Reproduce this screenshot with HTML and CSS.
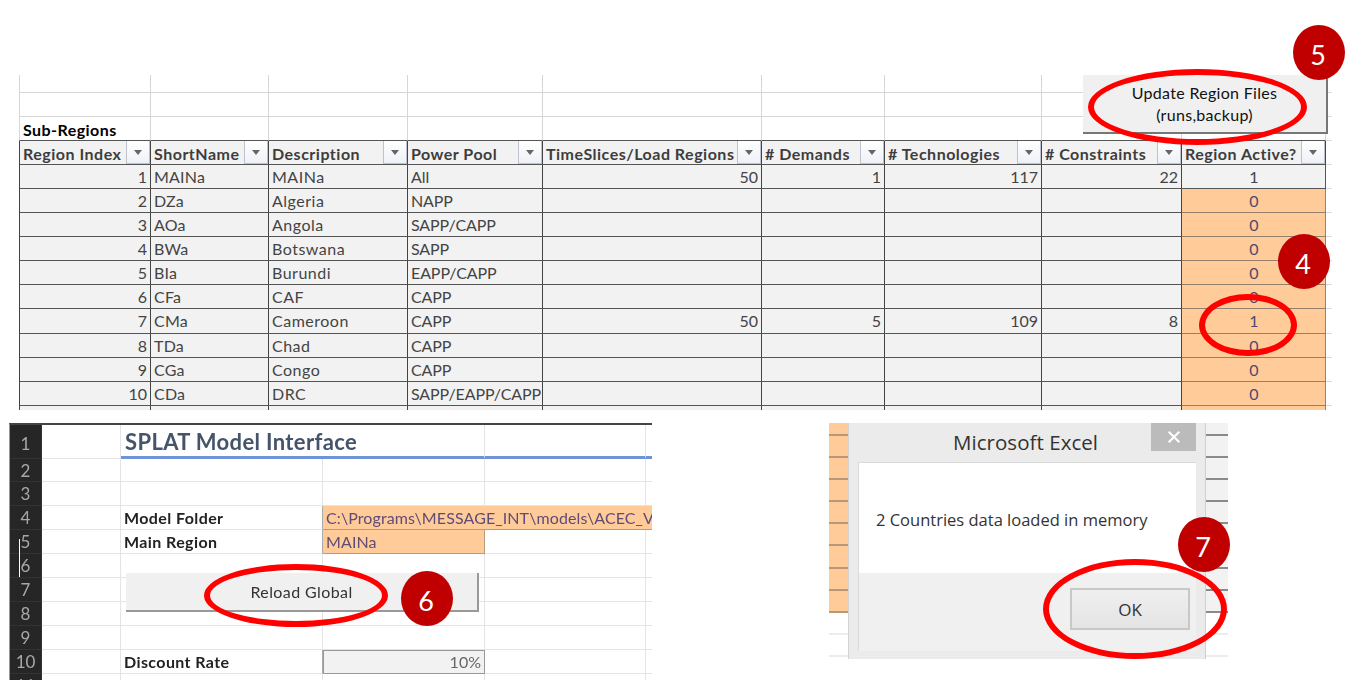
FILE: index.html
```
<!DOCTYPE html>
<html lang="en">
<head>
<meta charset="utf-8">
<title>SPLAT regions</title>
<link rel="stylesheet" href="styles.css">
</head>
<body>
<main class="page">
<section class="sheet">
  <div class="row blank short"><i></i><i></i><i></i><i></i><i></i><i></i><i></i><i></i><i></i><i></i></div>
  <div class="row blank"><i></i><i></i><i></i><i></i><i></i><i></i><i></i><i></i><i></i><i></i></div>
  <div class="row blank last"><b class="caption">Sub-Regions</b><i></i><i></i><i></i><i></i><i></i><i></i><i></i><i></i><i></i></div>
  <div class="row head"><b>Region Index<u></u></b><b>ShortName<u></u></b><b>Description<u></u></b><b>Power Pool<u></u></b><b>TimeSlices/Load Regions<u></u></b><b># Demands<u></u></b><b># Technologies<u></u></b><b># Constraints<u></u></b><b>Region Active?<u></u></b><i></i></div>
  <div class="row first"><span>1</span><span>MAINa</span><span>MAINa</span><span>All</span><span>50</span><span>1</span><span>117</span><span>22</span><span>1</span><i></i></div>
  <div class="row"><span>2</span><span>DZa</span><span>Algeria</span><span>NAPP</span><span></span><span></span><span></span><span></span><span>0</span><i></i></div>
  <div class="row"><span>3</span><span>AOa</span><span>Angola</span><span>SAPP/CAPP</span><span></span><span></span><span></span><span></span><span>0</span><i></i></div>
  <div class="row"><span>4</span><span>BWa</span><span>Botswana</span><span>SAPP</span><span></span><span></span><span></span><span></span><span>0</span><i></i></div>
  <div class="row"><span>5</span><span>BIa</span><span>Burundi</span><span>EAPP/CAPP</span><span></span><span></span><span></span><span></span><span>0</span><i></i></div>
  <div class="row"><span>6</span><span>CFa</span><span>CAF</span><span>CAPP</span><span></span><span></span><span></span><span></span><span>0</span><i></i></div>
  <div class="row"><span>7</span><span>CMa</span><span>Cameroon</span><span>CAPP</span><span>50</span><span>5</span><span>109</span><span>8</span><span>1</span><i></i></div>
  <div class="row"><span>8</span><span>TDa</span><span>Chad</span><span>CAPP</span><span></span><span></span><span></span><span></span><span>0</span><i></i></div>
  <div class="row"><span>9</span><span>CGa</span><span>Congo</span><span>CAPP</span><span></span><span></span><span></span><span></span><span>0</span><i></i></div>
  <div class="row"><span>10</span><span>CDa</span><span>DRC</span><span>SAPP/EAPP/CAPP</span><span></span><span></span><span></span><span></span><span>0</span><i></i></div>
  <div class="row"><span></span><span></span><span></span><span></span><span></span><span></span><span></span><span></span><span></span><i></i></div>
  <div class="update">Update Region Files<br>(runs,backup)</div>
</section>

<div class="lower">
  <section class="model">
    <div class="soft">
      <div class="line title"><em>1</em><i></i><h1>SPLAT Model Interface</h1><i></i><i></i><i></i></div>
      <div class="line"><em>2</em><i></i><i></i><i></i><i></i><i></i></div>
      <div class="line"><em>3</em><i></i><i></i><i></i><i></i><i></i></div>
      <div class="line"><em>4</em><i></i><b>Model Folder</b><span class="input wide">C:\Programs\MESSAGE_INT\models\ACEC_V</span></div>
      <div class="line"><em>5</em><i></i><b>Main Region</b><span class="input">MAINa</span><i></i><i></i></div>
      <div class="line"><em>6</em><i></i><i></i><i></i><i></i><i></i></div>
      <div class="line"><em>7</em><i></i><i></i><i></i><i></i><i></i></div>
      <div class="line"><em>8</em><i></i><i></i><i></i><i></i><i></i></div>
      <div class="line"><em>9</em><i></i><i></i><i></i><i></i><i></i></div>
      <div class="line"><em>10</em><i></i><b>Discount Rate</b><span class="rate">10%</span><i></i><i></i></div>
      <div class="line"><em>11</em><i></i><i></i><i></i><i></i><i></i></div>
      <div class="reload">Reload Global</div>
    </div>
    <div class="caret"></div>
  </section>

  <section class="message">
    <div class="strip orange"><i></i><i></i><i></i><i></i><i></i><i></i><i></i><i></i><i></i><i class="pale"></i><i class="pale"></i></div>
    <div class="dialog">
      <header><span>Microsoft Excel</span>
        <div class="close"><svg width="14" height="12" viewBox="0 0 14 12"><path d="M1.7 .8 12.3 11.2M12.3 .8 1.7 11.2" stroke="#fff" stroke-width="2.1"/></svg></div>
      </header>
      <div class="inner"><p>2 Countries data loaded in memory</p><footer><div class="ok">OK</div></footer></div>
    </div>
    <div class="strip grey"><i></i><i></i><i></i><i></i><i></i><i></i><i></i><i></i><i></i><i class="pale"></i><i class="pale"></i></div>
  </section>
</div>

<div class="ring ring-update"></div>
<div class="ring ring-active"></div>
<div class="ring ring-reload"></div>
<div class="ring ring-ok"></div>
<div class="badge b5">5</div>
<div class="badge b4">4</div>
<div class="badge b6">6</div>
<div class="badge b7">7</div>
</main>
</body>
</html>
```

FILE: styles.css
```
* { box-sizing: border-box; }
body { margin: 0; background: #fff; font-family: Lato, "Open Sans", sans-serif; }
.page { position: relative; width: 1366px; height: 695px; padding-top: 75px; overflow: hidden; }

/* region table */
.sheet { position: relative; width: 1313px; height: 335px; margin-left: 19px; overflow: hidden; font-size: 16px; color: #444; }
.row { display: grid; grid-template-columns: 132px 118px 139px 135px 219px 123px 157px 140px 144px 6px; grid-template-rows: 100%; height: 24.07px; white-space: nowrap; }
.row > * { border-right: 1px solid #444; border-bottom: 1px solid #555; background: #f2f2f2; padding: 0 3px; min-width: 0; font-style: normal; }
.row > :first-child { border-left: 1px solid #444; }
.row > i:last-child { background: #fff; border-right: 0; border-color: #d9d9d9; padding: 0; }
.row.short { height: 18px; }
.row.blank > * { background: #fff; border-color: #d6d6d6; }
.row.blank:not(.short) { height: 24px; }
.row.blank.last > *:not(:last-child) { border-bottom-color: #555; }
.row .caption { color: #000; line-height: 25px; letter-spacing: .45px; }
.row > span { line-height: 23px; }
.row > span:nth-child(2) { letter-spacing: .2px; }
.row > span:nth-child(3) { letter-spacing: .5px; }
.row > span:nth-child(4) { letter-spacing: -.1px; }
.row > span:nth-child(1), .row > span:nth-child(5), .row > span:nth-child(6), .row > span:nth-child(7), .row > span:nth-child(8) { text-align: right; }
.row > span:nth-child(9) { text-align: center; padding-left: 4px; background: #fc9; color: #504870; border-color: #94806c; }
.row.first > span:nth-child(9) { background: #f2f2f2; color: #444; border-color: #555; }
.head b { position: relative; line-height: 25px; letter-spacing: .5px; color: #3d3d3d; }
.head u { position: absolute; right: 0; top: 0; width: 24px; height: 23px; background: linear-gradient(#fff, #edf1f7); border: 1px solid #bcc3ce; border-top: 0; }
.head u::after { content: ""; position: absolute; left: 7px; top: 9px; border: 4.5px solid transparent; border-top: 5px solid #666; border-bottom: 0; }
.update { position: absolute; left: 1064px; top: 0; width: 245px; height: 59px; padding-top: 7px; background: #f0f0f0; border-right: 2px solid #777; border-bottom: 2px solid #777; color: #111; text-align: center; line-height: 22px; letter-spacing: .3px; }

/* lower figures */
.lower { display: flex; gap: 177px; margin: 13px 0 0 9px; align-items: flex-start; }
.model { position: relative; width: 643px; height: 257px; overflow: hidden; }
.soft { position: relative; width: 660px; height: 270px; border-top: 2px solid #444; border-left: 1px solid #999; filter: blur(.75px); font-size: 16px; }
.line { display: grid; grid-template-columns: 32px 79px 202px 162px 161px 24px; grid-template-rows: 100%; height: 23.9px; line-height: 24px; white-space: nowrap; }
.line > * { border-right: 1px solid #e4e4e4; border-bottom: 1px solid #e4e4e4; min-width: 0; font-style: normal; }
.line em { background: #262626; color: #a8a8a8; text-align: center; border-color: #333; font-size: 17px; }
.line b { padding-left: 3px; color: #222; border-right-color: #aaa; letter-spacing: .4px; }
.title { height: 33.5px; }
.title em { line-height: 38px; }
.title h1 { margin: 0; padding-left: 4px; font-size: 22px; line-height: 34px; letter-spacing: .35px; color: #44546a; border-right: 0; }
.title > :nth-child(n+3) { border-bottom: 3px solid #6f93d8; }
.line .input { background: #fc9; color: #5f4b78; padding-left: 3px; border-color: #b89b78; letter-spacing: .1px; }
.line .wide { grid-column: 4 / 7; }
.line .rate { background: #f2f2f2; color: #666; text-align: right; padding-right: 3px; border: 1px solid #999; line-height: 22px; }
.reload { position: absolute; left: 116px; top: 148px; width: 353px; height: 39px; line-height: 38px; text-align: center; background: #f0f0f0; border-right: 2px solid #999; border-bottom: 2px solid #999; color: #333; letter-spacing: .4px; }
.caret { position: absolute; left: 10px; top: 116px; width: 1px; height: 38px; background: #fff; }

.message { display: flex; width: 399px; height: 236px; overflow: hidden; font-family: "Open Sans", "Noto Sans", sans-serif; color: #333; }
.strip { width: 19px; display: flex; flex-direction: column; }
.strip i { flex: none; height: 22.2px; background: #fc9; border-bottom: 2px solid #b8987a; }
.strip i:first-child { height: 12.5px; }
.strip.grey { width: 22px; }
.strip.grey i { background: #f2f2f2; border-color: #8a8a8a; }
.strip i.pale, .strip.grey i.pale { background: #fff; border-color: #ececec; }
.dialog { width: 358px; padding: 0 9px 8px 9px; background: #ebebeb; border-left: 1px solid #d3d3d3; border-right: 1px solid #d0d0d0; display: flex; flex-direction: column; }
.dialog header { position: relative; height: 39px; line-height: 39px; text-align: center; font-size: 20.5px; padding-right: 3px; letter-spacing: .05px; }
.close { position: absolute; right: 0; top: 0; width: 45px; height: 28px; background: #bbb; display: flex; align-items: center; justify-content: center; }
.inner { flex: 1; display: flex; flex-direction: column; background: #fff; border: 1px solid #dadada; border-right: 0; border-bottom: 0; }
.inner p { margin: 0; height: 110px; padding-left: 17px; line-height: 113px; font-size: 16.5px; white-space: nowrap; }
.inner footer { flex: 1; background: #f0f0f0; padding: 15px 6px 0 0; display: flex; justify-content: flex-end; align-items: flex-start; }
.ok { width: 120px; height: 42px; line-height: 39px; text-align: center; font-size: 17px; border: 2px solid #c8c8c8; background: linear-gradient(#efefef, #e4e4e4); }

/* callouts */
.ring { position: absolute; border: 6px solid #f00; border-radius: 50%; }
.ring-update { left: 1088px; top: 69px; width: 219px; height: 76px; }
.ring-active { left: 1199px; top: 294px; width: 98px; height: 62px; }
.ring-reload { left: 204px; top: 564px; width: 184px; height: 63px; }
.ring-ok { left: 1043px; top: 559px; width: 184px; height: 100px; }
.badge { position: absolute; width: 52px; height: 55px; border-radius: 50%; background: #c00000; color: #fff; font-size: 27px; line-height: 60px; text-align: center; padding-right: 2px; }
.b5 { left: 1293px; top: 25px; }
.b4 { left: 1278px; top: 234px; }
.b6 { left: 401px; top: 571px; }
.b7 { left: 1178px; top: 517px; }
```
